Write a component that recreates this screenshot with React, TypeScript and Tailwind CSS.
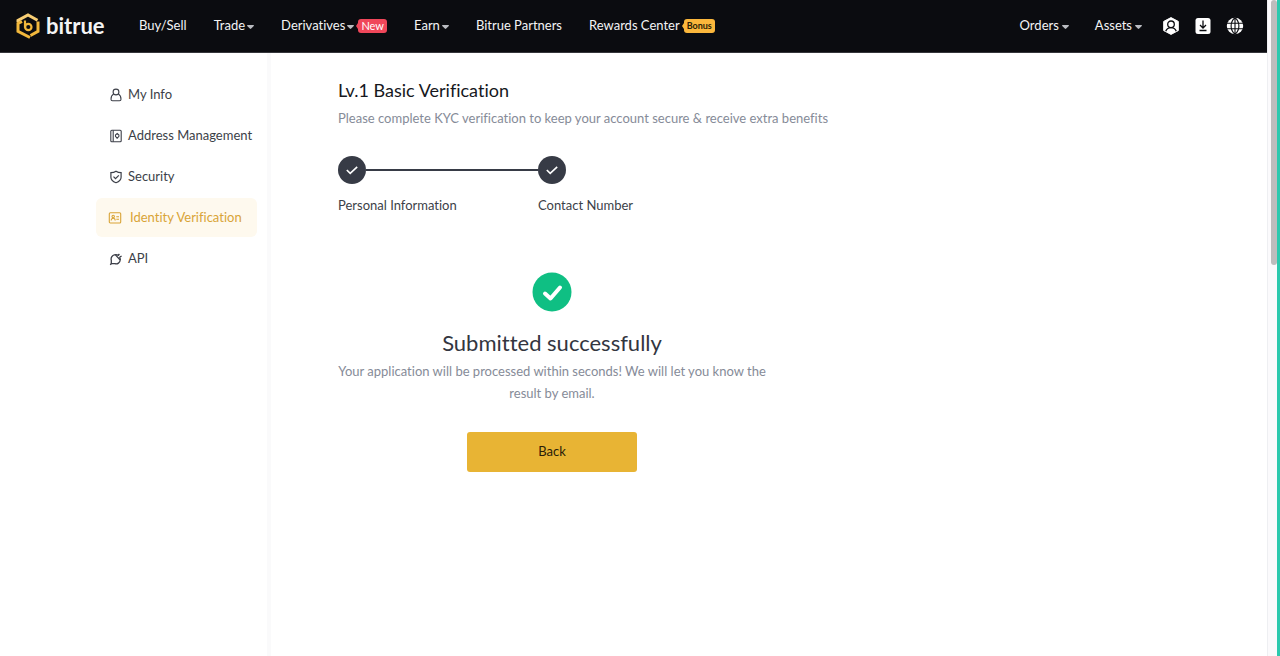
const Caret = () => (
  <svg className="mt-0.5 h-1 w-[7px]" viewBox="0 0 7 4" fill="#b9bbc0">
    <path d="M.7 0h5.600c.6 0 .9.600.5 1L4.200 3.600c-.4.400-1 .400-1.400 0L.2 1C-.2.600.1 0 .7 0z" />
  </svg>
);

const Logo = () => (
  <a href="#" className="flex w-[123px] items-center gap-[6px]" aria-label="bitrue">
    <svg className="h-[26px] w-6" viewBox="0 0 24 26" fill="none" stroke="#f2b83c" strokeWidth="3">
      <path d="M2 9V7.500L12 2l9.500 5.300" stroke="#f8ce74" />
      <path d="M22 8.500v9.800l-7.500 4.200M14 24.500 2 18.300V10.500l4-2" />
      <path d="M9 7.500V14.500" strokeWidth="2.200" />
      <circle cx="12.300" cy="14" r="3.200" strokeWidth="2.200" />
    </svg>
    <span className="text-[22px] leading-6 font-bold">bitrue</span>
  </a>
);

const UserIcon = () => (
  <svg className="h-3.5 w-3.5" viewBox="0 0 14 14" fill="none" stroke="currentColor" strokeWidth="1.100">
    <circle cx="7" cy="4" r="2.900" />
    <path d="M4.700 6.100C2.900 7 2 8.900 2 11.300c0 1 .5 1.500 1.500 1.500h7c1 0 1.500-.5 1.500-1.500 0-2.400-.9-4.300-2.700-5.200" />
  </svg>
);

const AddressIcon = () => (
  <svg className="h-3.5 w-3.5" viewBox="0 0 14 14" fill="none" stroke="currentColor" strokeWidth="1.100">
    <rect x="1.800" y="1.200" width="10.400" height="11.600" rx="1" />
    <path d="M4.200 1.200v11.600" />
    <path d="M8.200 9.300 6.500 7.400V5.900l1.700-1.400 1.700 1.400v1.500z" />
  </svg>
);

const ShieldIcon = () => (
  <svg className="h-3.5 w-3.5" viewBox="0 0 14 14" fill="none" stroke="currentColor" strokeWidth="1.200">
    <path d="M7 1.200c1.500 1 3.200 1.400 5.100 1.400v4.600c0 2.600-2 4.300-5.100 5.500-3.100-1.200-5.100-2.900-5.100-5.500V2.600c1.900 0 3.600-.4 5.100-1.400z" />
    <path d="m4.500 6.700 2 2 3.300-3.400" />
  </svg>
);

const IdentityIcon = () => (
  <svg className="h-3.5 w-3.5" viewBox="0 0 14 14" fill="none" stroke="currentColor" strokeWidth="1.100">
    <rect x="1.300" y="1.800" width="11.400" height="10.200" rx="1" />
    <circle cx="5.200" cy="5.500" r="1.200" />
    <path d="M3.200 9.600c0-1.600.8-2.400 2-2.400s2 .8 2 2.400M8.300 5.800h2.700M8.300 8.300h2.700" />
  </svg>
);

const ApiIcon = () => (
  <svg className="h-3.5 w-3.5" viewBox="0 0 14 14" fill="none" stroke="currentColor" strokeWidth="1.300">
    <path d="M6.200 2.600 11.200 8c-.2 2.700-2.700 4.400-5.300 3.700H2.300V8.300C1.500 5.500 3.300 3 6.200 2.600z" strokeLinejoin="round" />
    <path d="M6.200 2.600c1.300-.2 2.300.1 3.200.8M11.200 8c.1-1.200-.1-2.200-.7-3M9.200 3.600 10.400 2M10.600 5l2-.8M2.400 11.600l-1.200 1.200" />
  </svg>
);

const ProfileIcon = () => (
  <svg className="h-[18px] w-[18px]" viewBox="0 0 18 18">
    <path d="M9 .6 16.300 4.400v9.200L9 17.400 1.700 13.600V4.400z" fill="#fff" stroke="#fff" strokeWidth="1" strokeLinejoin="round" />
    <circle cx="9" cy="7.300" r="3.300" fill="none" stroke="#0b0c10" strokeWidth="1.300" />
    <path d="M3.700 14.200c1-2.300 2.800-3.500 5.300-3.500s4.300 1.200 5.300 3.500" fill="none" stroke="#0b0c10" strokeWidth="1.300" />
  </svg>
);

const DownloadIcon = () => (
  <svg className="h-[18px] w-[18px]" viewBox="0 0 18 18">
    <rect x="1.500" y="1" width="15" height="16" rx="2.500" fill="#fff" />
    <path d="M9 3.500v7.200M6 8l3 3 3-3M5.500 13.500h7" fill="none" stroke="#0b0c10" strokeWidth="1.300" />
  </svg>
);

const GlobeIcon = () => (
  <svg className="h-[18px] w-[18px]" viewBox="0 0 18 18">
    <circle cx="9" cy="9" r="8.200" fill="#fff" />
    <path
      d="M1 6.200h16M1 11.800h16M9 .8v16.400M9 .8C3.800 5 3.800 13 9 17.200M9 .8c5.200 4.200 5.200 12.200 0 16.400"
      fill="none"
      stroke="#0b0c10"
      strokeWidth="1.100"
    />
  </svg>
);

const menus = [
  { label: "Buy/Sell" },
  { label: "Trade", caret: true },
  { label: "Derivatives", caret: true, tag: "New" },
  { label: "Earn", caret: true },
  { label: "Bitrue Partners" },
  { label: "Rewards Center", tag: "Bonus" },
];

const Tag = ({ text }: { text: string }) => {
  const isNew = text === "New";
  return (
    <span className="flex items-center">
      <span
        className={`border-y-[3px] border-r-2 border-y-transparent ${isNew ? "border-r-[#f0475a]" : "border-r-[#fbb73c]"}`}
      />
      <span
        className={`rounded-[3px] px-[3px] leading-[14px] ${
          isNew ? "bg-[#f0475a] text-[11px] text-white" : "bg-[#fbb73c] text-[9px] font-bold text-[#2b1c05]"
        }`}
      >
        {text}
      </span>
    </span>
  );
};

const Header = () => {
  return (
    <header className="flex h-[53px] items-center border-b border-[#35363b] bg-[#0b0c10] pr-[23px] pl-4 text-[#f4f4f5]">
      <Logo />
      <nav className="flex items-center gap-[27px]">
        {menus.map((menu) => (
          <a key={menu.label} href="#" className="flex items-center gap-0.5 whitespace-nowrap">
            {menu.label}
            {menu.caret && <Caret />}
            {menu.tag && <Tag text={menu.tag} />}
          </a>
        ))}
      </nav>
      <div className="ml-auto flex items-center gap-[26px]">
        <button className="flex items-center gap-[3px]">
          Orders <Caret />
        </button>
        <button className="flex items-center gap-[3px]">
          Assets <Caret />
        </button>
        <div className="-ml-1.5 flex gap-3.5">
          <button aria-label="Profile"><ProfileIcon /></button>
          <button aria-label="Download"><DownloadIcon /></button>
          <button aria-label="Language"><GlobeIcon /></button>
        </div>
      </div>
    </header>
  );
};

const sideMenus = [
  { label: "My Info", icon: <UserIcon /> },
  { label: "Address Management", icon: <AddressIcon /> },
  { label: "Security", icon: <ShieldIcon /> },
  { label: "Identity Verification", icon: <IdentityIcon />, active: true },
  { label: "API", icon: <ApiIcon /> },
];

const Sidebar = () => {
  return (
    <aside className="w-[271px] shrink-0 border-r-4 border-[#fafafb] pt-[22px] pr-2.5 pl-24">
      <ul className="flex flex-col gap-0.5">
        {sideMenus.map((menu) => (
          <li key={menu.label}>
            <a
              href="#"
              className={`flex h-[39px] items-center rounded-md whitespace-nowrap ${
                menu.active ? "gap-2 bg-[#fef9ee] pl-3 text-[#d9a437]" : "gap-[5px] pl-[13px] text-[#3c3f48]"
              }`}
            >
              {menu.icon}
              {menu.label}
            </a>
          </li>
        ))}
      </ul>
    </aside>
  );
};

const StepCircle = () => (
  <span className="flex h-7 w-7 shrink-0 items-center justify-center rounded-full bg-[#373b46]">
    <svg className="h-3 w-3" viewBox="0 0 12 12" fill="none" stroke="#fff" strokeWidth="1.600">
      <path d="m.8 6 3.400 3.400L11.200 2.800" />
    </svg>
  </span>
);

const Content = () => {
  return (
    <main className="flex-1 pt-6 pl-[67px]">
      <h1 className="text-[18px] leading-[26px] text-[#16181d]">Lv.1 Basic Verification</h1>
      <p className="mt-1.5 leading-[18px] text-[#868b98]">
        Please complete KYC verification to keep your account secure &amp; receive extra benefits
      </p>
      <ol className="mt-[29px] flex text-[#3c3f48]">
        <li className="w-[200px]">
          <div className="flex items-center">
            <StepCircle />
            <span className="h-0.5 flex-1 bg-[#373b46]" />
          </div>
          <p className="mt-3 leading-[18px]">Personal Information</p>
        </li>
        <li>
          <StepCircle />
          <p className="mt-3 leading-[18px]">Contact Number</p>
        </li>
      </ol>
      <section className="mt-[58px] flex max-w-[428px] flex-col items-center text-center">
        <svg className="h-10 w-10" viewBox="0 0 40 40" fill="none">
          <circle cx="20" cy="20" r="19.500" fill="#0fbf83" />
          <path d="m13 21.500 5.500 5L28 15.500" stroke="#fff" strokeWidth="4" strokeLinecap="round" strokeLinejoin="round" />
        </svg>
        <h2 className="mt-[15px] text-[22px] leading-8 text-[#33363f]">Submitted successfully</h2>
        <p className="-mx-1 mt-px leading-[22px] text-[#868b98]">
          Your application will be processed within seconds! We will let you know the result by email.
        </p>
        <button className="mt-7 h-10 w-[170px] rounded-[3px] bg-[#e8b434] text-[#2a1d08]">Back</button>
      </section>
    </main>
  );
};

const App = () => {
  return (
    <div className="flex min-h-screen bg-white font-['Lato','Liberation_Sans',sans-serif] text-[13px] [font-variant-ligatures:none]">
      <div className="flex min-w-0 flex-1 flex-col">
        <Header />
        <div className="flex flex-1">
          <Sidebar />
          <Content />
        </div>
      </div>
      <div className="w-[13px] border-r-[3px] border-l border-r-[#2cc9ae] border-l-[#eeeff2] bg-[#fbfafc] pl-[3px]">
        <div className="h-[265px] w-1.5 rounded-full bg-[#bdbdbd]" />
      </div>
    </div>
  );
};

export default App;
